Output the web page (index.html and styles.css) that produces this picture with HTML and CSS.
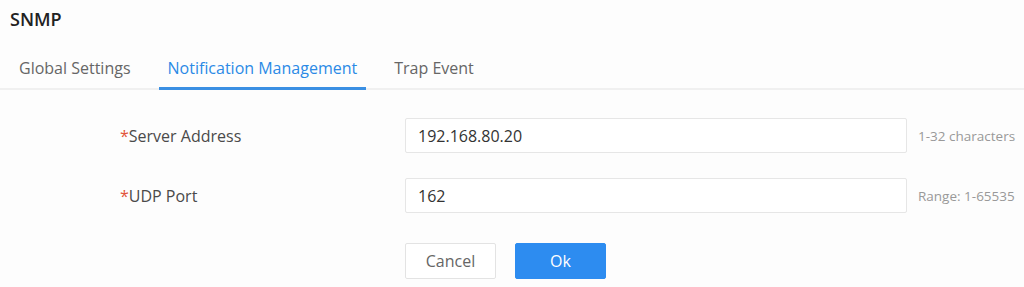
FILE: index.html
```html
<!DOCTYPE html>
<html lang="en">

<head>
    <meta charset="UTF-8">
    <meta name="viewport" content="width=device-width, initial-scale=1.0">
    <title>SNMP</title>
    <link rel="stylesheet" href="styles.css">
</head>

<body>
    <div class="page">
        <h1 class="page-title">SNMP</h1>

        <div class="tabs">
            <div class="tab">Global Settings</div>
            <div class="tab active">Notification Management</div>
            <div class="tab">Trap Event</div>
        </div>

        <form class="form">
            <div class="form-row">
                <label class="form-label"><span class="req">*</span>Server Address</label>
                <input class="form-input" type="text" value="192.168.80.20">
                <span class="form-hint">1-32 characters</span>
            </div>
            <div class="form-row">
                <label class="form-label"><span class="req">*</span>UDP Port</label>
                <input class="form-input" type="text" value="162">
                <span class="form-hint">Range: 1-65535</span>
            </div>
            <div class="form-actions">
                <button type="button" class="btn">Cancel</button>
                <button type="button" class="btn btn-primary">Ok</button>
            </div>
        </form>
    </div>
</body>

</html>
```

FILE: styles.css
```css
* {
    box-sizing: border-box;
}

body {
    margin: 0;
    background: #fdfdfd;
    font-family: "Open Sans", "Liberation Sans", sans-serif;
    color: #333;
}

.page-title {
    margin: 0;
    padding: 5px 10px 0;
    height: 44px;
    font-size: 18px;
    font-weight: 600;
    line-height: 28px;
    color: #222;
}

/* 标签页 */
.tabs {
    display: flex;
    gap: 19px;
    padding-left: 10px;
    border-bottom: 2px solid #f0f0f0;
}

.tab {
    padding: 13px 9px 0;
    height: 46px;
    line-height: 22px;
    font-size: 16px;
    color: #666;
    border-bottom: 3px solid transparent;
    margin-bottom: -2px;
}

.tab.active {
    color: #2b8ae6;
    border-bottom-color: #3a8fe3;
}

/* 表单 */
.form {
    padding: 28px 0 0 120px;
}

.form-row {
    display: flex;
    align-items: center;
    margin-bottom: 25px;
}

.form-label {
    width: 285px;
    font-size: 16px;
    color: #4a4a4a;
}

.req {
    color: #e2543a;
}

.form-input {
    width: 502px;
    height: 35px;
    padding: 0 12px;
    border: 1px solid #e6e6e6;
    border-radius: 2px;
    background: #fff;
    font-family: inherit;
    font-size: 16px;
    color: #333;
    outline: none;
}

.form-hint {
    margin-left: 11px;
    font-size: 13.5px;
    color: #999;
}

.form-actions {
    display: flex;
    gap: 19px;
    padding-left: 285px;
    margin-top: 30px;
}

.btn {
    width: 91px;
    height: 36px;
    border: 1px solid #e3e3e3;
    border-radius: 2px;
    background: #fff;
    font-family: inherit;
    font-size: 16px;
    color: #666;
}

.btn-primary {
    border-color: #2d8cf0;
    background: #2d8cf0;
    color: #fff;
}
```
